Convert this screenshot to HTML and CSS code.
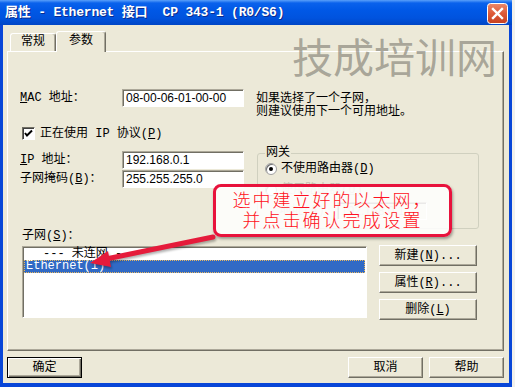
FILE: index.html
```html
<!doctype html>
<html lang="zh-CN">
<head>
    <meta charset="UTF-8">
    <title>属性 - Ethernet 接口</title>
    <link rel="stylesheet" href="styles.css">
</head>
<body>
    <div class="window">
        <div class="titlebar">
            <span class="title">属性 - Ethernet 接口  CP 343-1 (R0/S6)</span>
            <span class="close">
                <svg width="21" height="21" viewBox="0 0 21 21">
                    <defs>
                        <linearGradient id="cg" x1="0" y1="0" x2="0" y2="1">
                            <stop offset="0" stop-color="#ec8a6c"/>
                            <stop offset="0.5" stop-color="#de5a38"/>
                            <stop offset="1" stop-color="#c5401f"/>
                        </linearGradient>
                    </defs>
                    <rect x="0.5" y="0.5" width="20" height="20" rx="3" fill="url(#cg)" stroke="#fff"/>
                    <path d="M6 6 L15 15 M15 6 L6 15" stroke="#fff" stroke-width="2.4" stroke-linecap="square"/>
                </svg>
            </span>
        </div>
        <div class="client">
            <div class="tabs">
                <div class="tab">常规</div>
                <div class="tab active">参数</div>
            </div>
            <div class="panel">
                <div class="mac-row">
                    <span class="lbl"><u>M</u>AC 地址：</span>
                    <div class="field">08-00-06-01-00-00</div>
                    <p class="hint">如果选择了一个子网，<br>则建议使用下一个可用地址。</p>
                </div>
                <div class="check-row">
                    <span class="checkbox">
                        <svg width="11" height="11" viewBox="0 0 11 11"><path d="M2 5 L4 7.5 L9 2.5" fill="none" stroke="#000" stroke-width="2"/></svg>
                    </span>
                    正在使用 IP 协议(<u>P</u>)
                </div>
                <div class="mid">
                    <div class="addr">
                        <div class="row">
                            <span class="lbl"><u>I</u>P 地址：</span>
                            <div class="field">192.168.0.1</div>
                        </div>
                        <div class="row">
                            <span class="lbl">子网掩码(<u>B</u>)：</span>
                            <div class="field">255.255.255.0</div>
                        </div>
                    </div>
                    <fieldset class="gateway">
                        <legend>网关</legend>
                        <div class="radio-row"><span class="radio on"></span>不使用路由器(<u>D</u>)</div>
                        <div class="radio-row off"><span class="radio"></span>使用路由器(<u>U</u>)</div>
                        <div class="gw-addr off">
                            <span class="gw-lbl">地址(<u>A</u>)</span>
                            <div class="field dis">192.168.0.1</div>
                        </div>
                    </fieldset>
                </div>
                <div class="subnet-lbl">子网(<u>S</u>)：</div>
                <div class="subnet">
                    <ul class="list">
                        <li class="none">--- 未连网 ---</li>
                        <li class="sel">Ethernet(1)</li>
                    </ul>
                    <div class="side-btns">
                        <button class="btn">新建(<u>N</u>)...</button>
                        <button class="btn">属性(<u>R</u>)...</button>
                        <button class="btn">删除(<u>L</u>)</button>
                    </div>
                </div>
            </div>
            <div class="footer">
                <button class="btn default">确定</button>
                <span class="spacer"></span>
                <button class="btn">取消</button>
                <button class="btn">帮助</button>
            </div>
        </div>

        <div class="watermark">技成培训网</div>
        <div class="callout">选中建立好的以太网，<br>并点击确认完成设置</div>
        <svg class="arrow" width="512" height="387" viewBox="0 0 512 387">
            <path d="M213 237 L106 259" stroke="#e51b3b" stroke-width="5" stroke-linecap="round"/>
            <polygon points="90,263 108,251 111,267" fill="#e51b3b"/>
        </svg>
    </div>
</body>
</html>
```

FILE: styles.css
```css
*{
    margin:0;
    padding:0;
    box-sizing:border-box;
}
body{
    background:#f2f1ec;
    font:12px/14px "Liberation Mono","Noto Sans CJK SC",monospace;
    color:#000;
}
ul{
    list-style:none;
}
.window{
    position:relative;
    width:512px;
    height:387px;
    background:#0846d8;
    display:flex;
    flex-direction:column;
}
.titlebar{
    height:25px;
    display:flex;
    align-items:center;
    padding:0 4px 0 5px;
    background:linear-gradient(#5aa0fa 0,#0a62ec 3px,#0058e6 10px,#0053de 18px,#0046c6 25px);
}
.title{
    flex:1;
    color:#fff;
    font-weight:bold;
    font-size:13px;
    letter-spacing:-0.2px;
    white-space:pre;
    text-shadow:1px 1px 0 #0b2b8c;
}
.close{
    width:21px;
    height:21px;
    margin-top:1px;
}
.close svg{
    display:block;
}
.client{
    flex:1;
    margin:0 3px 4px;
    background:#ece9d8;
    padding:6px 5px 5px 4px;
    display:flex;
    flex-direction:column;
}

/* tabs */
.tabs{
    display:flex;
    align-items:flex-end;
    height:20px;
    padding-left:3px;
    position:relative;
    z-index:1;
}
.tab{
    width:46px;
    height:18px;
    border:1px solid #fff;
    border-bottom:none;
    border-right-color:#716f64;
    border-radius:3px 3px 0 0;
    box-shadow:inset -1px 0 #aca899;
    text-align:center;
    line-height:17px;
    background:#ece9d8;
}
.tab.active{
    width:50px;
    height:21px;
    margin-bottom:-1px;
    line-height:18px;
}

/* panel */
.panel{
    height:300px;
    border:1px solid #fff;
    border-right-color:#716f64;
    border-bottom-color:#716f64;
    box-shadow:inset -1px -1px #aca899;
    padding:37px 0 0 12px;
}
.mac-row{
    display:flex;
    align-items:flex-start;
    height:26px;
}
.lbl{
    width:102px;
    line-height:18px;
    white-space:nowrap;
}
.field{
    width:122px;
    height:18px;
    background:#fff;
    border:1px solid;
    border-color:#aca899 #fff #fff #aca899;
    box-shadow:inset 1px 1px #716f64;
    padding:1px 0 0 3px;
    font:12px/15px "Liberation Sans",sans-serif;
}
.hint{
    margin:1px 0 0 12px;
    line-height:13px;
    font-family:"Noto Sans CJK SC",sans-serif;
}
.check-row{
    display:flex;
    align-items:center;
    margin-top:12px;
    padding-left:2px;
    height:13px;
}
.checkbox{
    width:13px;
    height:13px;
    margin-right:5px;
    background:#fff;
    border:1px solid;
    border-color:#716f64 #fff #fff #716f64;
    box-shadow:inset 1px 1px #404040;
    display:flex;
    align-items:center;
    justify-content:center;
}
.checkbox svg{
    display:block;
}
.mid{
    display:flex;
    align-items:flex-start;
    margin-top:11px;
}
.addr{
    width:224px;
}
.row{
    display:flex;
    height:18px;
}
.row + .row{
    margin-top:1px;
}
.gateway{
    margin:-4px 0 0 13px;
    width:222px;
    height:82px;
    border:1px solid #d0d0bf;
    border-radius:3px;
    padding:0 6px 0 7px;
}
.gateway legend{
    padding:0 1px;
    line-height:12px;
}
.radio-row{
    display:flex;
    align-items:center;
    height:13px;
    margin-top:3px;
    white-space:nowrap;
}
.radio-row + .radio-row{
    margin-top:8px;
}
.radio{
    width:12px;
    height:12px;
    border-radius:50%;
    background:#fff;
    border:1px solid #a0a0a0;
    box-shadow:inset 1px 1px #707070;
    margin-right:4px;
    display:flex;
    align-items:center;
    justify-content:center;
}
.radio.on::after{
    content:"";
    width:4px;
    height:4px;
    border-radius:50%;
    background:#000;
}
.off{
    color:#c4c0b0;
}
.gw-addr{
    display:flex;
    align-items:center;
    margin-top:6px;
    padding-left:14px;
}
.gw-lbl{
    width:58px;
    white-space:nowrap;
}
.field.dis{
    width:90px;
    background:#ece9d8;
    color:#c4c0b0;
}
.subnet-lbl{
    margin-left:2px;
    line-height:14px;
}
.subnet{
    display:flex;
    margin-top:3px;
}
.list{
    width:345px;
    height:72px;
    margin-left:2px;
    background:#fff;
    border:1px solid;
    border-color:#aca899 #fff #fff #aca899;
    box-shadow:inset 1px 1px #716f64;
    padding:1px;
}
.list li{
    height:12px;
    line-height:12px;
    padding-left:2px;
    white-space:pre;
}
.list .none{
    padding-left:19px;
}
.list .sel{
    height:13px;
    background:#316ac5;
    color:#fff;
    outline:1px dotted #e8b860;
    outline-offset:-1px;
}
.side-btns{
    display:flex;
    flex-direction:column;
    gap:6px;
    margin:-1px 0 0 12px;
}
.btn{
    width:98px;
    height:21px;
    background:#ece9d8;
    border:1px solid;
    border-color:#fff #716f64 #716f64 #fff;
    box-shadow:inset -1px -1px #aca899;
    font:12px/14px "Liberation Mono","Noto Sans CJK SC",monospace;
    color:#000;
}
.footer{
    display:flex;
    gap:6px;
    margin-top:6px;
}
.footer .btn{
    width:75px;
}
.spacer{
    flex:1;
}
.btn.default{
    border:1px solid #000;
    box-shadow:inset 1px 1px #fff,inset -1px -1px #716f64,inset -2px -2px #aca899;
}

/* overlays */
.watermark{
    position:absolute;
    left:292px;
    top:32px;
    font:41px/46px "Noto Sans CJK SC",sans-serif;
    color:rgba(110,108,98,0.55);
    white-space:nowrap;
}
.callout{
    position:absolute;
    left:213px;
    top:184px;
    width:239px;
    height:53px;
    border:3px solid #e8123c;
    border-radius:8px;
    background:rgba(255,255,255,0.85);
    box-shadow:1px 2px 3px rgba(0,0,0,0.35);
    padding-top:2px;
    text-align:center;
    color:#ff1020;
    font:300 18px/20px "Noto Sans CJK SC",sans-serif;
    letter-spacing:2px;
}
.arrow{
    position:absolute;
    left:0;
    top:0;
    pointer-events:none;
    filter:drop-shadow(1px 2px 1px rgba(0,0,0,0.3));
}
```
